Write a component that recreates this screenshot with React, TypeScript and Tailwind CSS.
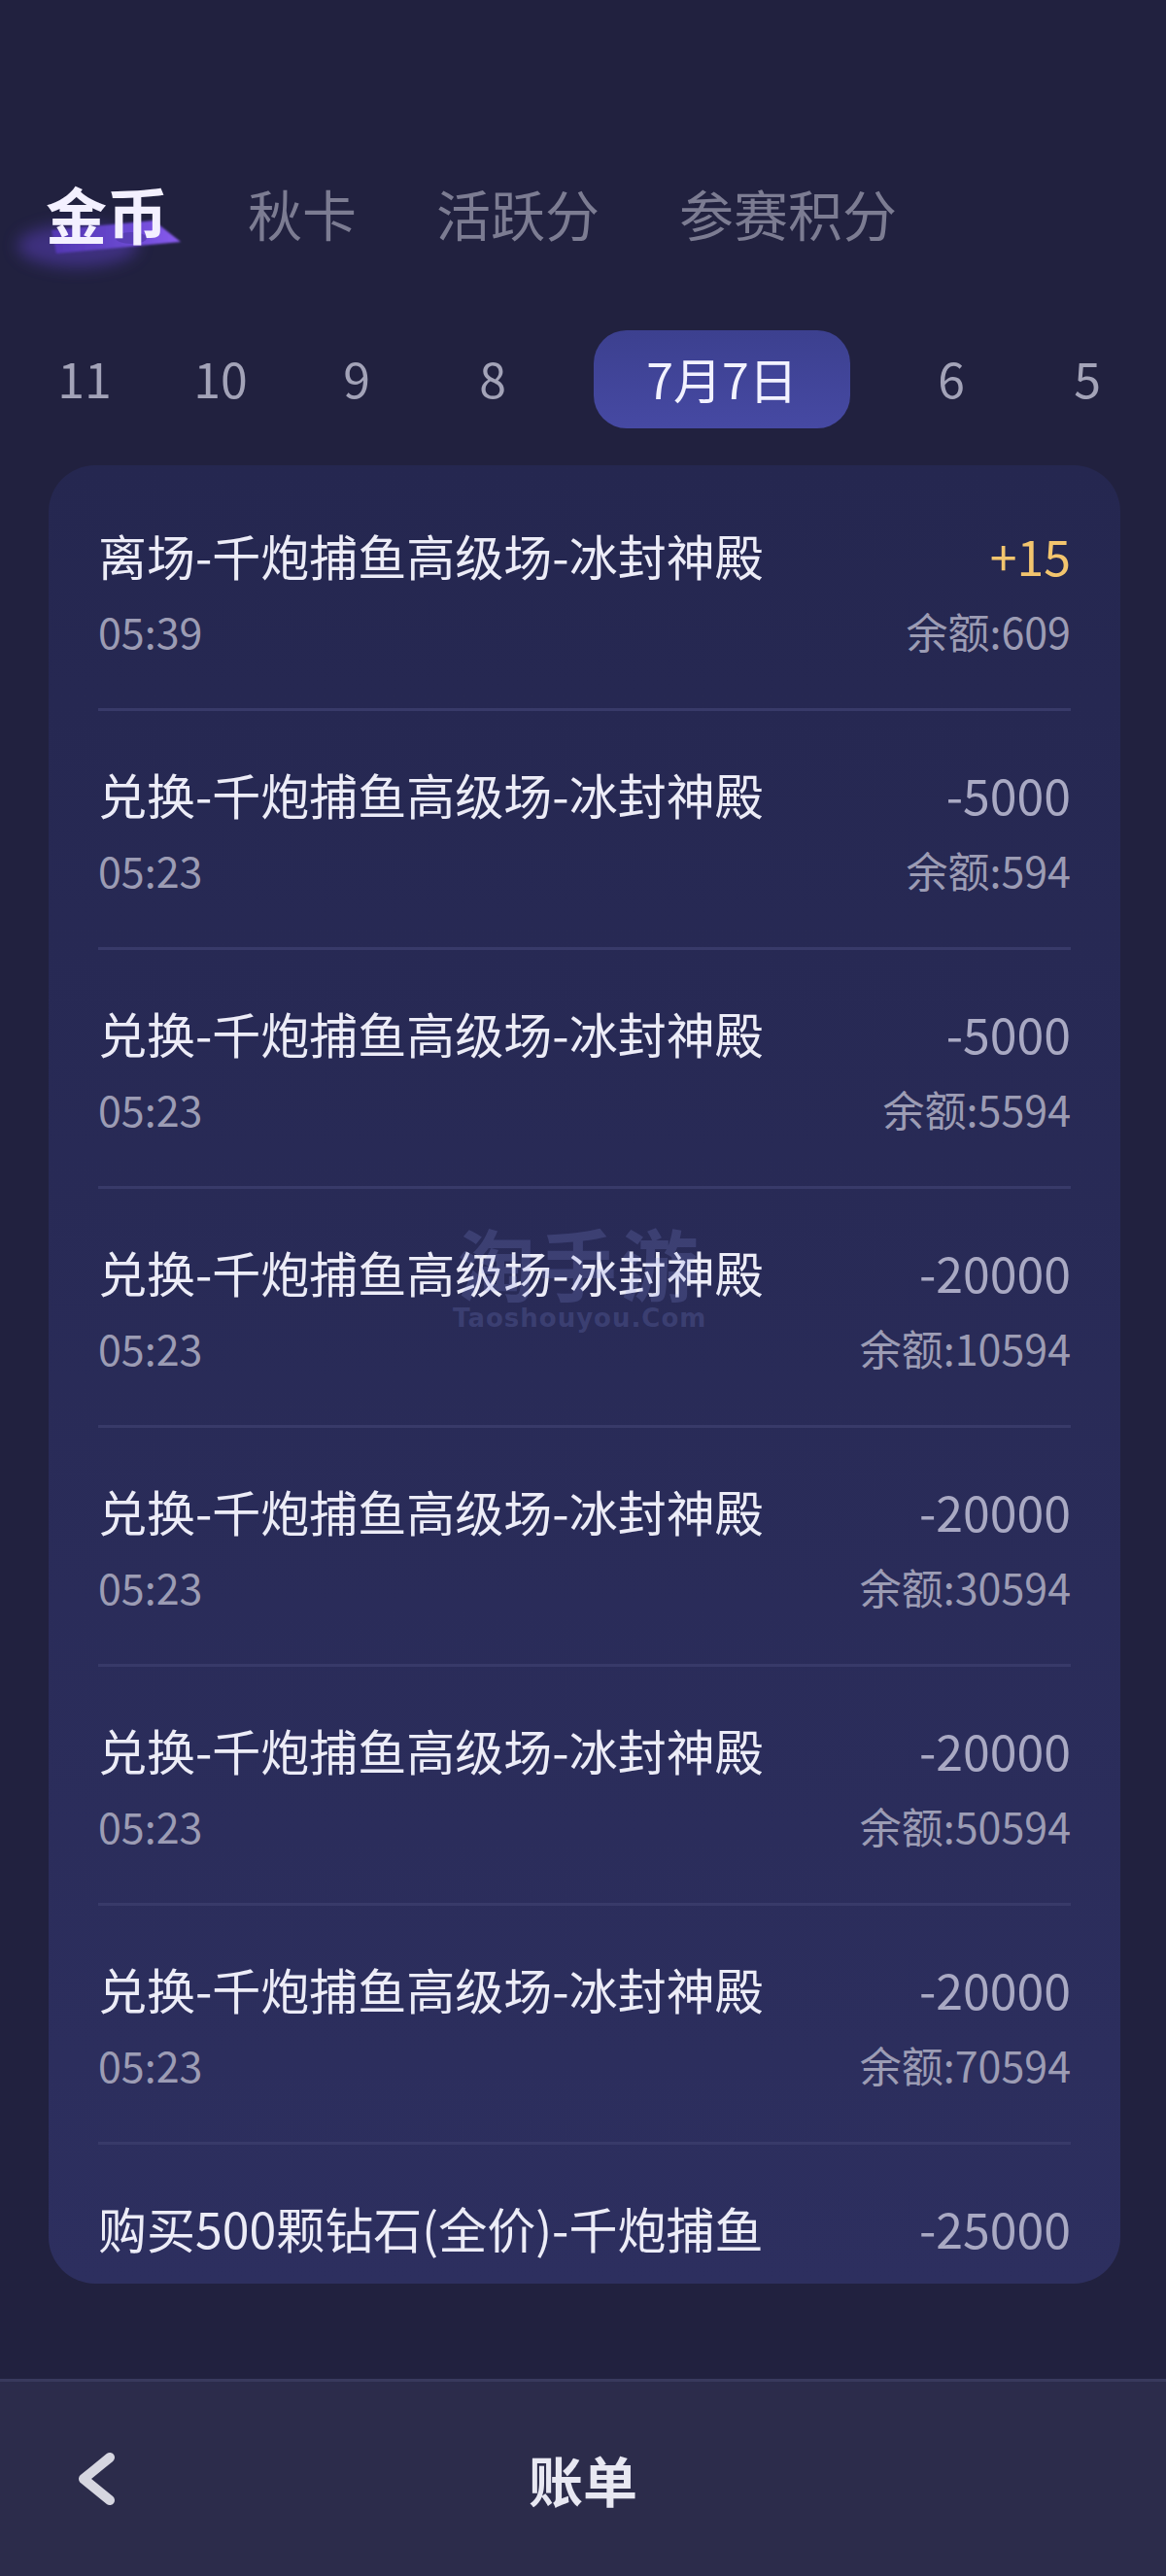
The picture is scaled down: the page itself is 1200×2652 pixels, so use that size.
import React from "react";

type Row = { title: string; time: string; amount: string; balance: string; gold?: boolean };

const rows: Row[] = [
  { title: "离场-千炮捕鱼高级场-冰封神殿", time: "05:39", amount: "+15", balance: "余额:609", gold: true },
  { title: "兑换-千炮捕鱼高级场-冰封神殿", time: "05:23", amount: "-5000", balance: "余额:594" },
  { title: "兑换-千炮捕鱼高级场-冰封神殿", time: "05:23", amount: "-5000", balance: "余额:5594" },
  { title: "兑换-千炮捕鱼高级场-冰封神殿", time: "05:23", amount: "-20000", balance: "余额:10594" },
  { title: "兑换-千炮捕鱼高级场-冰封神殿", time: "05:23", amount: "-20000", balance: "余额:30594" },
  { title: "兑换-千炮捕鱼高级场-冰封神殿", time: "05:23", amount: "-20000", balance: "余额:50594" },
  { title: "兑换-千炮捕鱼高级场-冰封神殿", time: "05:23", amount: "-20000", balance: "余额:70594" },
  { title: "购买500颗钻石(全价)-千炮捕鱼", time: "05:20", amount: "-25000", balance: "余额:95594" },
];

const dates = ["11", "10", "9", "8"];

export default function App() {
  return (
    <div className="relative flex min-h-[2652px] w-[1200px] flex-col bg-[#21213f] font-['Noto_Sans_CJK_SC','Noto_Sans',sans-serif]">
      {/* Tabs */}
      <div className="mt-[169px] flex h-[100px] items-center gap-[82px] pl-[47px]">
        <div className="relative">
          <svg
            className="pointer-events-none absolute left-[-47px] top-[-10px]"
            width="260"
            height="120"
            viewBox="0 0 260 120"
          >
            <defs>
              <filter id="glow" x="-50%" y="-50%" width="200%" height="200%">
                <feGaussianBlur stdDeviation="8" />
              </filter>
              <filter id="soft" x="-10%" y="-10%" width="120%" height="120%">
                <feGaussianBlur stdDeviation="0.8" />
              </filter>
              <linearGradient id="pg" x1="0" y1="0" x2="1" y2="0">
                <stop offset="0" stopColor="#5237b0" />
                <stop offset="0.6" stopColor="#6b49d2" />
                <stop offset="1" stopColor="#8a5cf0" />
              </linearGradient>
            </defs>
            <ellipse cx="80" cy="76" rx="62" ry="22" fill="#5b3fc0" opacity="0.5" filter="url(#glow)" />
            <polygon points="53,60 158,50 186,72 58,84" fill="url(#pg)" filter="url(#soft)" />
            <ellipse cx="135" cy="68" rx="16" ry="6" fill="#4a34a0" opacity="0.55" />
          </svg>
          <span className="relative text-[63px] font-bold leading-none text-[#f3f0ff]">金币</span>
        </div>
        <span className="text-[56px] leading-none text-[#7c7c92]">秋卡</span>
        <span className="text-[56px] leading-none text-[#7c7c92]">活跃分</span>
        <span className="text-[56px] leading-none text-[#7c7c92]">参赛积分</span>
      </div>

      {/* Dates */}
      <div className="mt-[71px] flex h-[101px] items-center pl-[17px]">
        {dates.map((d) => (
          <div key={d} className="w-[140px] pb-[6px] text-center text-[50px] leading-none text-[#a3a3b8]">
            {d}
          </div>
        ))}
        <div className="flex w-[332px] justify-center">
          <div className="flex h-[101px] w-[264px] items-center justify-center rounded-[34px] bg-gradient-to-b from-[#3c408f] to-[#4649a3] pb-[4px] text-[50px] leading-none text-[#f2f2ff]">
            7月7日
          </div>
        </div>
        {["6", "5"].map((d) => (
          <div key={d} className="w-[140px] pb-[6px] text-center text-[50px] leading-none text-[#a3a3b8]">
            {d}
          </div>
        ))}
      </div>

      {/* Card */}
      <div className="ml-[50px] mt-[38px] h-[1872px] w-[1103px] overflow-hidden rounded-[48px] bg-gradient-to-b from-[#252750] to-[#2d2f5f] px-[51px] pt-[7px]">
        {rows.map((r, i) => (
          <div key={i} className="border-b-[3px] border-[#383a69] pb-[55px] pt-[55px]">
            <div className="flex h-[60px] items-center justify-between leading-[60px]">
              <span className="text-[50px] text-[#ececf7]">{r.title}</span>
              <span className={`text-[50px] ${r.gold ? "text-[#f3c56e]" : "text-[#a9a9c3]"}`}>{r.amount}</span>
            </div>
            <div className="mt-[23px] flex h-[50px] items-center justify-between leading-[50px]">
              <span className="text-[43px] text-[#9c9cb4]">{r.time}</span>
              <span className="text-[43px] text-[#9c9cb4]">{r.balance}</span>
            </div>
          </div>
        ))}
      </div>

      {/* Watermark */}
      <div className="pointer-events-none absolute left-[466px] top-[1258px] flex flex-col items-center">
        <span className="text-[80px] font-bold leading-none tracking-[4px] text-[rgba(140,150,230,0.2)]">淘手游</span>
        <span className="mt-[6px] font-['DejaVu_Sans',sans-serif] text-[26px] font-bold leading-none tracking-[1px] text-[rgba(140,150,230,0.2)]">
          Taoshouyou.Com
        </span>
      </div>

      <div className="flex-1" />

      {/* Bottom bar */}
      <div className="grid h-[203px] grid-cols-[1fr_auto_1fr] items-center border-t-[3px] border-[#393a5d] bg-[#2c2c4b]">
        <div className="pl-[80px]">
          <svg width="40" height="60" viewBox="0 0 40 60" className="block">
            <polyline
              points="33,8 6,30 33,52"
              fill="none"
              stroke="#d6d6e0"
              strokeWidth="10"
              strokeLinecap="round"
              strokeLinejoin="round"
            />
          </svg>
        </div>
        <span className="text-[56px] font-bold leading-none text-[#e8e8f2]">账单</span>
        <div />
      </div>
    </div>
  );
}
